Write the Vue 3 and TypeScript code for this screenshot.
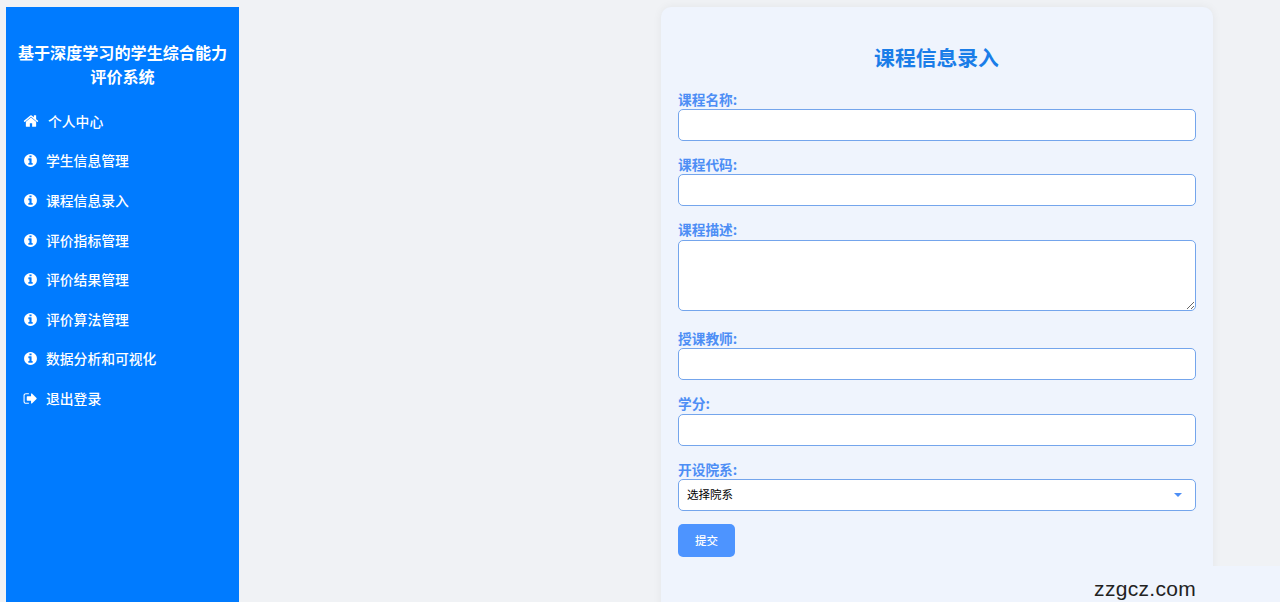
<script setup lang="ts">
const menu = [
  { label: '学生信息管理' },
  { label: '课程信息录入' },
  { label: '评价指标管理' },
  { label: '评价结果管理' },
  { label: '评价算法管理' },
  { label: '数据分析和可视化' },
]
const infoPath = 'M1152 1376v-160q0-14-9-23t-23-9h-96v-512q0-14-9-23t-23-9h-320q-14 0-23 9t-9 23v160q0 14 9 23t23 9h96v320h-96q-14 0-23 9t-9 23v160q0 14 9 23t23 9h448q14 0 23-9t9-23zm-128-896v-160q0-14-9-23t-23-9h-192q-14 0-23 9t-9 23v160q0 14 9 23t23 9h192q14 0 23-9t9-23zm640 416q0 209-103 385.5t-279.5 279.5-385.5 103-385.5-103-279.5-279.5-103-385.5 103-385.5 279.5-279.5 385.5-103 385.5 103 279.5 279.5 103 385.5z'
</script>

<template>
  <div class="page">
    <aside class="sidebar">
      <h2 class="brand">基于深度学习的学生综合能力评价系统</h2>
      <ul class="menu">
        <li class="item home">
          <svg class="icon" viewBox="0 0 1792 1792"><path fill="currentColor" d="M1472 992v480q0 26-19 45t-45 19h-384v-384h-256v384h-384q-26 0-45-19t-19-45v-480q0-1 .5-3t.5-3l575-474 575 474q1 2 1 6zm223-69l-62 74q-8 9-21 11h-3q-13 0-21-7l-692-577-692 577q-12 8-24 7-13-2-21-11l-62-74q-8-10-7-23.5t11-21.5l719-599q32-26 76-26t76 26l244 204v-195q0-14 9-23t23-9h192q14 0 23 9t9 23v408l219 182q10 8 11 21.5t-7 23.5z"/></svg>
          <span>个人中心</span>
        </li>
        <li v-for="m in menu" :key="m.label" class="item">
          <svg class="icon" viewBox="0 0 1792 1792"><path fill="currentColor" :d="infoPath"/></svg>
          <span>{{ m.label }}</span>
        </li>
        <li class="item">
          <svg class="icon" viewBox="0 0 1792 1792"><path fill="currentColor" d="M704 1440q0 4 1 20t.5 26.5-3 23.5-10 19.5-20.5 6.5h-320q-119 0-203.5-84.5t-84.5-203.5v-704q0-119 84.5-203.5t203.5-84.5h320q13 0 22.5 9.5t9.5 22.5q0 4 1 20t.5 26.5-3 23.5-10 19.5-20.5 6.5h-320q-66 0-113 47t-47 113v704q0 66 47 113t113 47h312l11.5 1 11.5 3 8 5.5 7 9 2 13.5zm928-544q0 26-19 45l-544 544q-19 19-45 19t-45-19-19-45v-288h-448q-26 0-45-19t-19-45v-384q0-26 19-45t45-19h448v-288q0-26 19-45t45-19 45 19l544 544q19 19 19 45z"/></svg>
          <span>退出登录</span>
        </li>
      </ul>
    </aside>
    <main class="main">
      <form class="card" @submit.prevent>
        <h2 class="title">课程信息录入</h2>
        <div class="field">
          <label class="label">课程名称:</label>
          <input class="control" type="text" />
        </div>
        <div class="field">
          <label class="label">课程代码:</label>
          <input class="control" type="text" />
        </div>
        <div class="field">
          <label class="label">课程描述:</label>
          <textarea class="control area"></textarea>
        </div>
        <div class="field">
          <label class="label">授课教师:</label>
          <input class="control" type="text" />
        </div>
        <div class="field">
          <label class="label">学分:</label>
          <input class="control" type="text" />
        </div>
        <div class="field">
          <label class="label">开设院系:</label>
          <div class="select-wrap">
            <select class="control select"><option>选择院系</option></select>
            <span class="caret"></span>
          </div>
        </div>
        <button class="submit" type="submit">提交</button>
      </form>
    </main>
    <div class="watermark">zzgcz.com</div>
  </div>
</template>

<style>
html, body { margin: 0; background: #f0f2f5; }
</style>

<style scoped>
.page {
  position: relative;
  display: flex;
  height: 595px;
  padding: 7px 0 0 6px;
  overflow: hidden;
  background: #f0f2f5;
  font-family: "Noto Sans CJK SC", "Noto Sans", sans-serif;
}
.sidebar {
  flex: 0 0 233px;
  background: #007bff;
  color: #fff;
  padding-top: 33px;
  box-sizing: border-box;
  height: 595px;
}
.brand {
  margin: 0 8px 13px;
  font-size: 16.1px;
  line-height: 24px;
  font-weight: 700;
  text-align: center;
}
.menu { list-style: none; margin: 0; padding: 0; }
.item {
  display: flex;
  align-items: center;
  height: 39.6px;
  padding-left: 17px;
  font-size: 13.8px;
  font-weight: 500;
}
.item span { margin-left: 8px; }
.home span { margin-left: 9px; }
.icon { width: 15px; height: 15px; flex: none; margin-top: 1px; }
.home .icon { width: 16px; height: 16px; margin-top: 0; }
.main { flex: 1; padding-left: 422px; }
.card {
  width: 552px;
  height: 640px;
  box-sizing: border-box;
  padding: 36px 17px 0;
  background: #eff4fd;
  border-radius: 10px;
  box-shadow: 0 0 10px rgba(0, 0, 0, 0.06);
}
.title {
  margin: 0 0 19.7px;
  padding-right: 1px;
  color: #1a7de8;
  font-size: 20.8px;
  line-height: 28px;
  font-weight: 700;
  text-align: center;
}
.field { margin-bottom: 15.1px; }
.label {
  display: block;
  padding-bottom: 2.3px;
  color: #4d8ef5;
  font-size: 13.7px;
  line-height: 16px;
  font-weight: 700;
}
.control {
  display: block;
  width: 100%;
  height: 32px;
  box-sizing: border-box;
  margin: 0;
  border: 1px solid #74a5ec;
  border-radius: 5px;
  background: #fff;
  outline: none;
  font-family: inherit;
}
.area { height: 71px; margin-bottom: 19.3px; }
.select-wrap { position: relative; }
.select {
  appearance: none;
  padding: 0 8px 2px;
  font-size: 11.5px;
  color: #000;
}
.caret {
  position: absolute;
  right: 14px;
  top: 13.5px;
  width: 0;
  height: 0;
  border-left: 4px solid transparent;
  border-right: 4px solid transparent;
  border-top: 4px solid #4d8ef5;
}
.submit {
  display: block;
  width: 57px;
  height: 33px;
  margin-top: -2px;
  padding: 0 0 2px;
  border: none;
  border-radius: 5px;
  background: #4d94ff;
  color: #fff;
  font-family: inherit;
  font-size: 11.5px;
  font-weight: 500;
}
.watermark {
  position: absolute;
  right: 0;
  bottom: 0;
  width: 240px;
  height: 36px;
  box-sizing: border-box;
  padding: 13px 84px 0 0;
  background: #eff4fd;
  color: #222;
  font-family: "Liberation Sans", Arial, sans-serif;
  font-size: 21px;
  letter-spacing: 0.3px;
  line-height: 20px;
  text-align: right;
}
</style>
